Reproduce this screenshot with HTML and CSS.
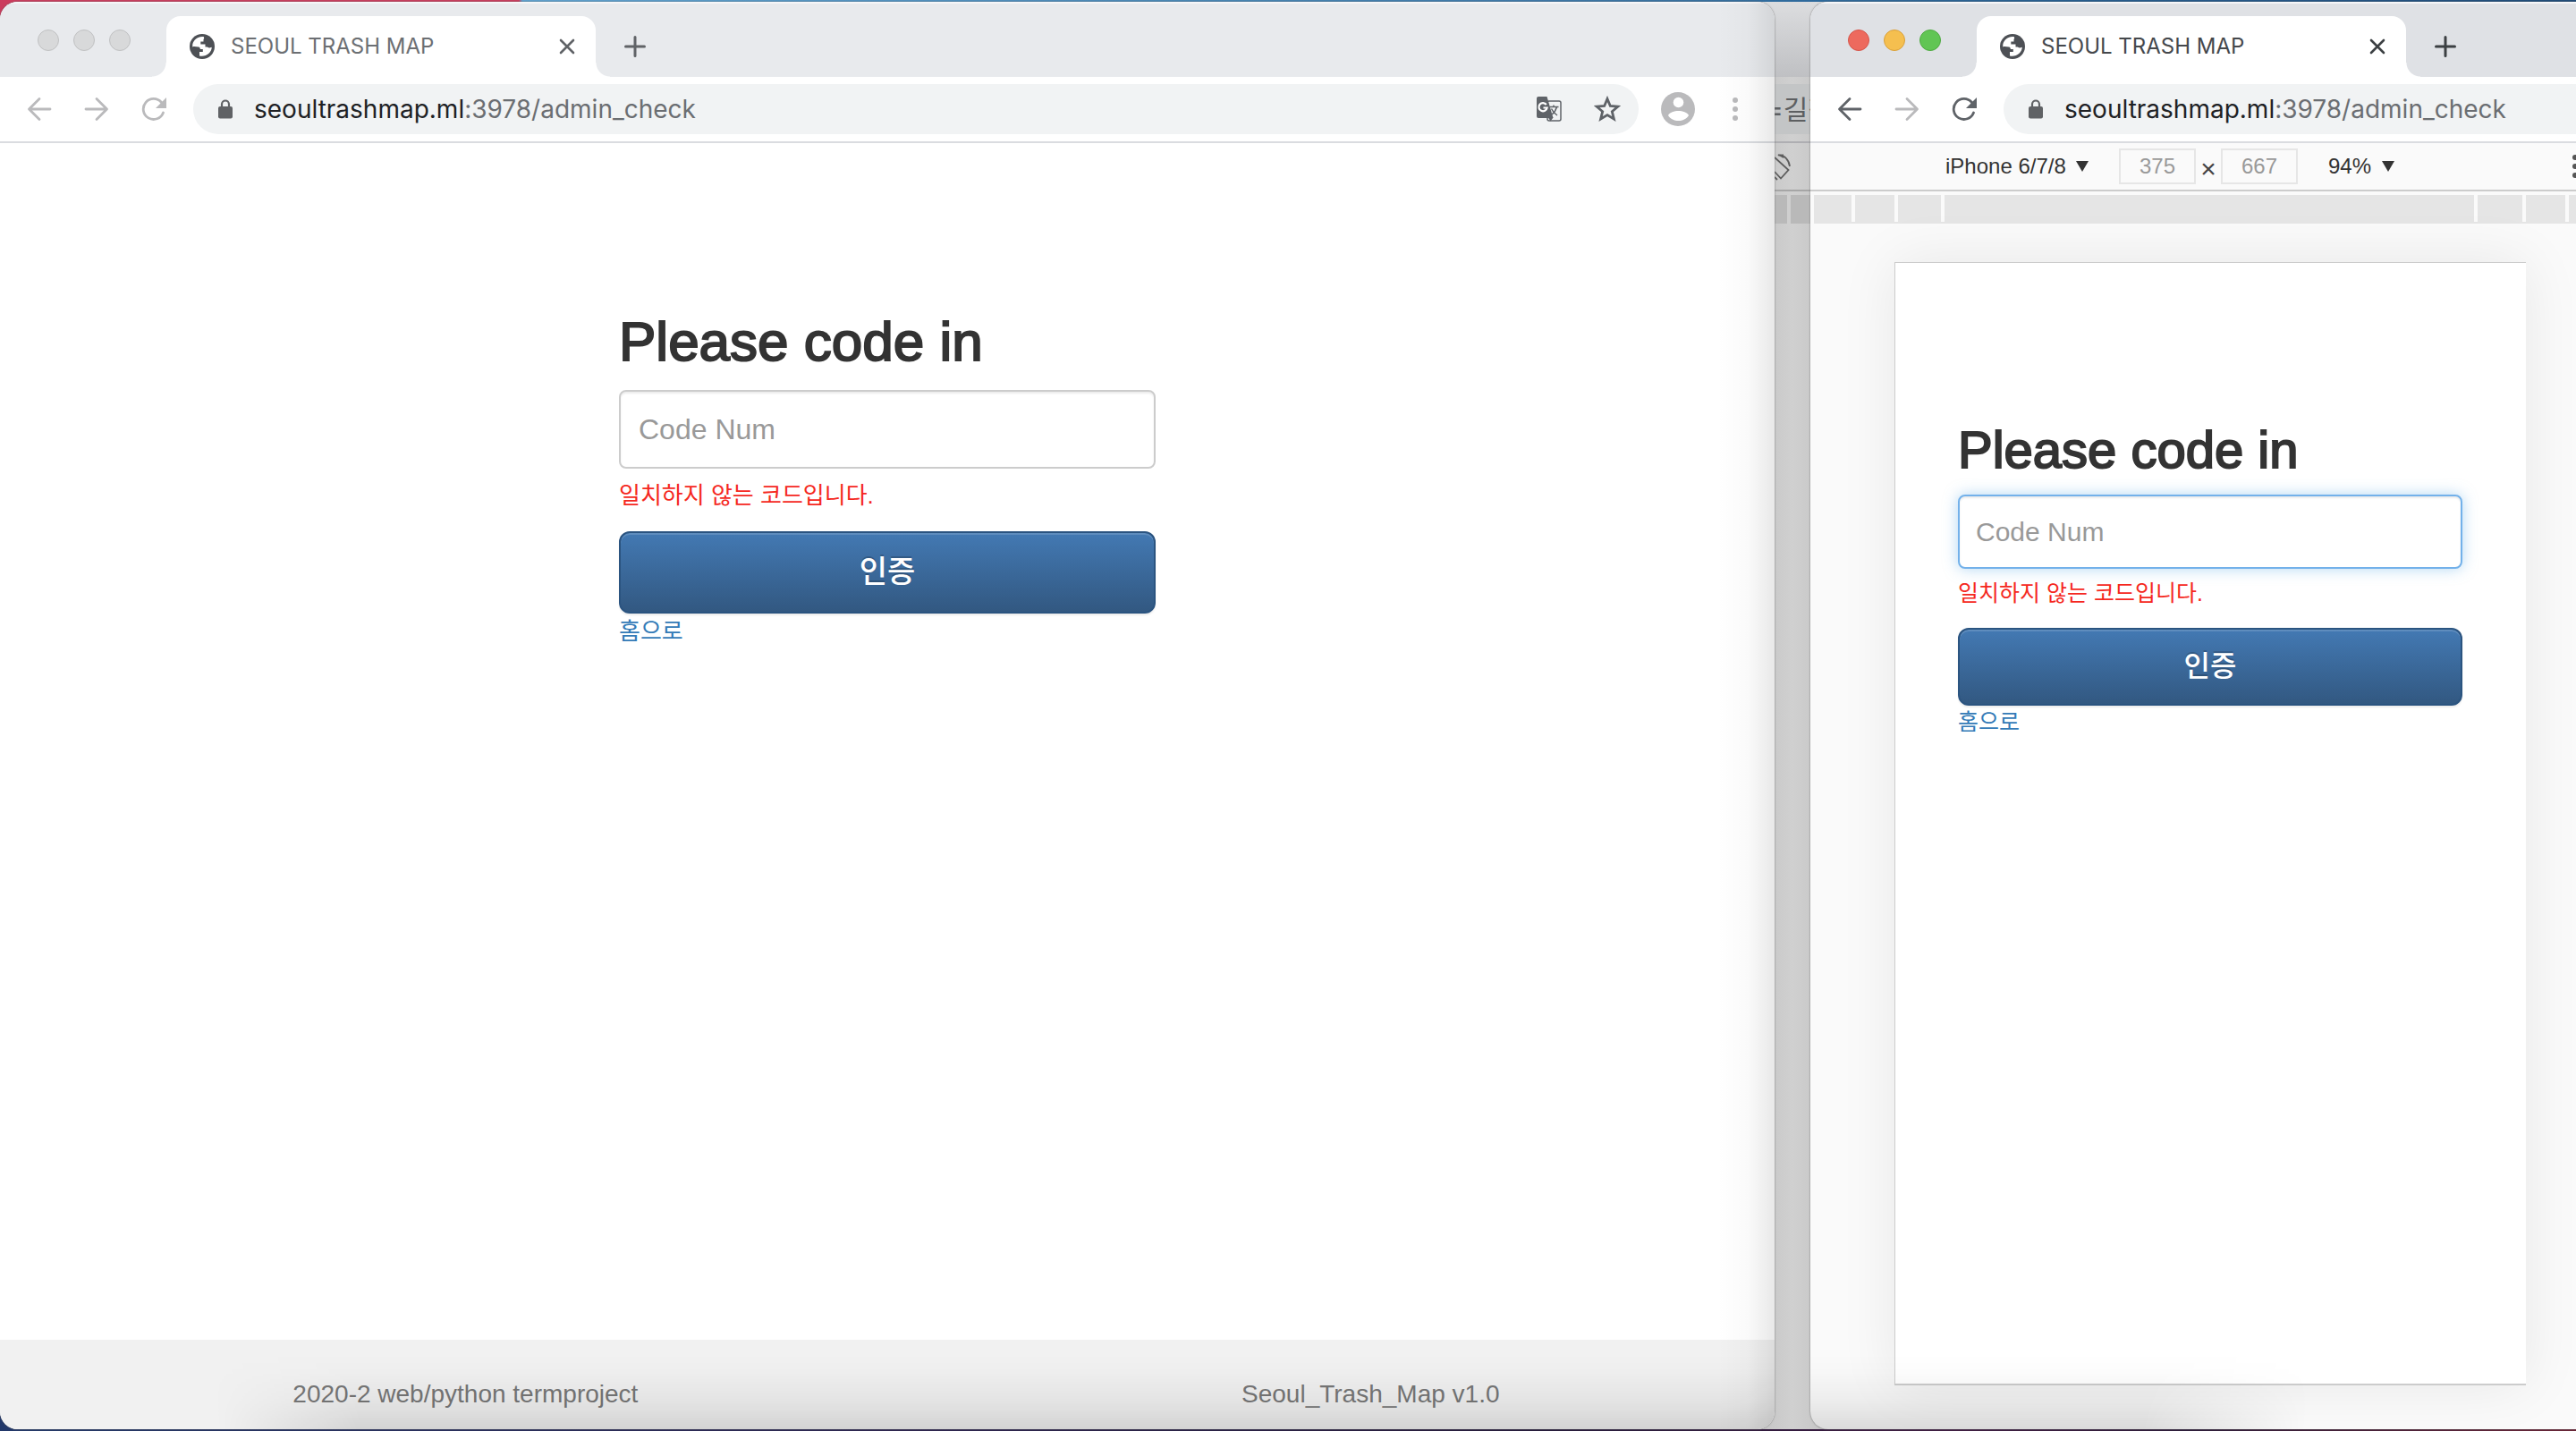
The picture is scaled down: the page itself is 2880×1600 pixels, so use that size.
FILE: index.html
```html
<!DOCTYPE html>
<html lang="ko">
<head>
<meta charset="utf-8">
<title>SEOUL TRASH MAP</title>
<link rel="stylesheet" href="styles.css">
</head>
<body>
<svg class="defs" aria-hidden="true">
  <symbol id="globe" viewBox="0 0 28 28">
    <circle cx="14" cy="14" r="14" fill="#4d5055"/>
    <path fill="#fff" d="M16 3.200C10 2 4.500 6 3.300 11.500L3.200 14.500C5 13.500 8 14.500 10 14.500C11.500 14.500 11.800 16 11.800 17H14.800V20H11V24.500C18 26 24.800 21 24.800 14.500C24 15.500 21.500 16 19.800 14.500H17.500V11.500H12.300V8.500H15.500V6Q16.500 5.500 16 3.200Z"/>
  </symbol>
  <symbol id="close" viewBox="0 0 18 18"><path d="M2 2 16 16M16 2 2 16" fill="none" stroke="currentColor" stroke-width="2.600" stroke-linecap="round"/></symbol>
  <symbol id="plus" viewBox="0 0 24 24"><path d="M12 1.500V22.500M1.500 12H22.500" fill="none" stroke="currentColor" stroke-width="3" stroke-linecap="round"/></symbol>
  <symbol id="back" viewBox="0 0 28 28"><path d="M26 14H3M14 2.500 2.500 14 14 25.500" fill="none" stroke="currentColor" stroke-width="2.800" stroke-linecap="round" stroke-linejoin="round"/></symbol>
  <symbol id="forward" viewBox="0 0 28 28"><path d="M2 14H25M14 2.500 25.500 14 14 25.500" fill="none" stroke="currentColor" stroke-width="2.800" stroke-linecap="round" stroke-linejoin="round"/></symbol>
  <symbol id="reload" viewBox="0 0 28 28"><path d="M24.500 18A11.500 11.500 0 1 1 22.500 6.500" fill="none" stroke="currentColor" stroke-width="2.800" stroke-linecap="round"/><path d="M28 1V13H16Z" fill="currentColor"/></symbol>
  <symbol id="lock" viewBox="0 0 18 22"><rect x="1" y="8" width="16" height="13.500" rx="2" fill="#606265"/><path d="M5 9V5.500A4 4 0 0 1 13 5.500V9" fill="none" stroke="#606265" stroke-width="2.200"/></symbol>
</svg>
<div class="desktop">

  <section class="window window-left">
    <header class="strip">
      <span class="light"></span><span class="light"></span><span class="light"></span>
      <div class="tab">
        <svg class="globe"><use href="#globe"/></svg>
        <span class="tab-title">SEOUL TRASH MAP</span>
        <button class="icon-button" aria-label="Close tab"><svg class="close"><use href="#close"/></svg></button>
      </div>
      <button class="icon-button new-tab" aria-label="New tab"><svg class="plus"><use href="#plus"/></svg></button>
    </header>
    <nav class="toolbar">
      <button class="icon-button" aria-label="Back"><svg class="nav-icon"><use href="#back"/></svg></button>
      <button class="icon-button" aria-label="Forward"><svg class="nav-icon"><use href="#forward"/></svg></button>
      <button class="icon-button" aria-label="Reload"><svg class="nav-icon"><use href="#reload"/></svg></button>
      <div class="omnibox">
        <svg class="lock"><use href="#lock"/></svg>
        <span class="url"><b>seoultrashmap.ml</b>:3978/admin_check</span>
        <svg class="translate" viewBox="0 0 28 28">
          <rect x="12" y="5" width="15" height="22" rx="2" fill="#f1f3f4" stroke="#5f6368" stroke-width="1.500"/>
          <path d="M2 0H11.500L18.500 24H2A2 2 0 0 1 0 22V2A2 2 0 0 1 2 0Z" fill="#5f6368"/>
          <path d="M13 23.500H18.500L15.500 27.500Z" fill="#5f6368"/>
          <path d="M10.800 9A4.600 4.600 0 1 0 11.600 12.500H7.500" fill="none" stroke="#fff" stroke-width="2.200"/>
          <path d="M14.500 11.500H24.500M19 9.500V11.500M22.500 11.500Q21 17 17 20M16.500 13.500Q18.500 18 23 21" fill="none" stroke="#5f6368" stroke-width="1.500"/>
        </svg>
        <svg class="star" viewBox="0 0 30 30"><path d="M15 3.500 18.300 11.500 26.800 12.200 20.300 17.700 22.400 26 15 21.600 7.600 26 9.700 17.700 3.200 12.200 11.700 11.500Z" fill="none" stroke="#5f6368" stroke-width="2.800"/></svg>
      </div>
      <svg class="avatar" viewBox="0 0 38 38"><circle cx="19" cy="19" r="19" fill="#bababc"/><circle cx="19.500" cy="11.500" r="5.800" fill="#fff"/><path d="M8 26C9.500 22.500 15 21 19.500 21S29.500 22.500 31 26C28.500 30 24 32 19.500 32S10.500 30 8 26Z" fill="#fff"/></svg>
      <svg class="dots" viewBox="0 0 6 26"><g fill="currentColor"><circle cx="3" cy="3" r="3"/><circle cx="3" cy="13" r="3"/><circle cx="3" cy="23" r="3"/></g></svg>
    </nav>
    <main class="page">
      <form class="code-form">
        <h1>Please code in</h1>
        <input class="code" type="text" placeholder="Code Num" aria-label="Code Num">
        <p class="error">일치하지 않는 코드입니다.</p>
        <button class="submit" type="button">인증</button>
        <a class="home" href="#">홈으로</a>
      </form>
    </main>
    <footer class="footer"><span>2020-2 web/python termproject</span><span>Seoul_Trash_Map v1.0</span></footer>
  </section>

  <section class="behind">
    <div class="behind-strip"></div>
    <div class="behind-toolbar"><div class="behind-omnibox">=길찾</div></div>
    <div class="behind-device">
      <svg class="rotate" viewBox="0 0 20 34"><path d="M0 6 15.500 20 7 29.500 0 22M4 3.500C11 3 16 9 17 16M0 28 3 31" fill="none" stroke="#5d5d5d" stroke-width="1.800"/><path d="M3 3 10 2.500 10 7Z" fill="#5d5d5d"/></svg>
    </div>
    <div class="behind-ruler"></div>
  </section>

  <section class="window window-right">
    <header class="strip">
      <span class="light red"></span><span class="light yellow"></span><span class="light green"></span>
      <div class="tab">
        <svg class="globe"><use href="#globe"/></svg>
        <span class="tab-title">SEOUL TRASH MAP</span>
        <button class="icon-button" aria-label="Close tab"><svg class="close"><use href="#close"/></svg></button>
      </div>
      <button class="icon-button new-tab" aria-label="New tab"><svg class="plus"><use href="#plus"/></svg></button>
    </header>
    <nav class="toolbar">
      <button class="icon-button" aria-label="Back"><svg class="nav-icon"><use href="#back"/></svg></button>
      <button class="icon-button faded" aria-label="Forward"><svg class="nav-icon"><use href="#forward"/></svg></button>
      <button class="icon-button" aria-label="Reload"><svg class="nav-icon"><use href="#reload"/></svg></button>
      <div class="omnibox">
        <svg class="lock"><use href="#lock"/></svg>
        <span class="url"><b>seoultrashmap.ml</b>:3978/admin_check</span>
      </div>
    </nav>
    <div class="device-bar">
      <select class="pick model" aria-label="Device"><option>iPhone 6/7/8</option></select><span class="caret"></span>
      <input class="dimension" type="text" value="375" aria-label="Width">
      <span class="times">×</span>
      <input class="dimension" type="text" value="667" aria-label="Height">
      <select class="pick zoom" aria-label="Zoom"><option>94%</option></select><span class="caret"></span>
      <svg class="dots" viewBox="0 0 6 26"><g fill="currentColor"><circle cx="3" cy="3" r="3"/><circle cx="3" cy="13" r="3"/><circle cx="3" cy="23" r="3"/></g></svg>
    </div>
    <div class="ruler"><i></i><i></i><i></i><i></i><i></i><i></i><i></i></div>
    <div class="stage">
      <main class="device">
        <form class="code-form">
          <h1>Please code in</h1>
          <input class="code focused" type="text" placeholder="Code Num" aria-label="Code Num">
          <p class="error">일치하지 않는 코드입니다.</p>
          <button class="submit" type="button">인증</button>
          <a class="home" href="#">홈으로</a>
        </form>
      </main>
    </div>
  </section>
</div>
</body>
</html>
```
FILE: styles.css
```css
* { box-sizing: border-box; }

body {
  margin: 0;
  font-family: "Liberation Sans", "Noto Sans CJK KR", sans-serif;
  color: #333;
}

.defs { position: absolute; width: 0; height: 0; }

svg { display: block; flex: none; }

.desktop {
  display: grid;
  grid-template-columns: 1984fr 40fr 856fr;
  height: 100vh;
  padding: 2px 0;
  overflow: hidden;
  background:
    linear-gradient(90deg, #cb3c5d 0 580px, #5fa3d0 584px, #3c79aa 1700px, #235d90 2300px, #1d4a78) top / 100% 50% no-repeat,
    linear-gradient(90deg, #22386a, #2c2450 35%, #241a3a 60%, #3f1c42 76%, #2b1b38 85%, #6b2436) bottom / 100% 50% no-repeat;
}

/* browser windows */
.window {
  position: relative;
  z-index: 1;
  display: flex;
  flex-direction: column;
  min-width: 0;
  overflow: hidden;
  background: #fff;
}

.window-left {
  border-radius: 20px;
  box-shadow: 0 0 2px #666;
  color: #bababc;
}

.window-right {
  border-radius: 20px 0 0 20px;
  box-shadow: 0 0 2px #666;
  background: #fafafa;
  color: #5f6368;
}

/* soft shade along the bottom edge of each window */
.window::before {
  content: "";
  position: absolute;
  z-index: 2;
  inset: auto 0 0;
  height: 84px;
  pointer-events: none;
  background: linear-gradient(0deg, rgba(0, 0, 0, .12), rgba(0, 0, 0, .05) 32px, rgba(0, 0, 0, .01) 64px, transparent);
}

.window-left::before { mask-image: linear-gradient(80deg, transparent 240px, #000 400px); }
.window-right::before { mask-image: linear-gradient(100deg, #000 380px, transparent 560px); }

.window-left::after {
  content: "";
  position: absolute;
  inset: 0 0 0 auto;
  width: 64px;
  pointer-events: none;
  background: linear-gradient(270deg, rgba(0, 0, 0, .09), rgba(0, 0, 0, .02) 30px, transparent);
}

.strip {
  display: flex;
  align-items: center;
  height: 84px;
  padding-left: 42px;
  background: #e8eaed;
  border-top: 2px solid #f6f6f8;
}

.window-right .strip { background: #dfe1e5; }

.light {
  align-self: flex-start;
  width: 24px;
  height: 24px;
  margin: 29px 16px 0 0;
  border: 1px solid #c0c1c2;
  border-radius: 50%;
  background: #d8d9da;
}

.red { background: #ed6a5e; border-color: #d5554a; }
.yellow { background: #f5bf4f; border-color: #d9a03a; }
.green { background: #61c554; border-color: #4faa42; }

.tab {
  position: relative;
  display: flex;
  align-items: center;
  align-self: flex-end;
  width: 480px;
  height: 68px;
  margin: 0 32px 0 24px;
  padding: 0 23px 0 26px;
  border-radius: 16px 16px 0 0;
  background: #fff;
}

.tab::before,
.tab::after {
  content: "";
  position: absolute;
  bottom: 0;
  width: 16px;
  height: 16px;
}

.tab::before { right: 100%; background: radial-gradient(circle at 0 0, transparent 15px, #fff 16px); }
.tab::after { left: 100%; background: radial-gradient(circle at 100% 0, transparent 15px, #fff 16px); }

.globe { width: 28px; height: 28px; }

.tab-title {
  flex: 1;
  margin-left: 18px;
  font: 24px/32px Inter, sans-serif;
  color: #6c6f73;
}

.window-right .tab-title { color: #45484c; }

.icon-button {
  display: block;
  padding: 0;
  border: 0;
  background: none;
  color: inherit;
}

.strip .icon-button { color: #606367; }
.window-right .strip .icon-button { color: #3c4043; }
.new-tab { padding-top: 14px; }
.close { width: 18px; height: 18px; }
.plus { width: 24px; height: 24px; }

.toolbar {
  display: flex;
  align-items: center;
  gap: 36px;
  height: 74px;
  padding-left: 30px;
  border-bottom: 2px solid #dadce0;
  background: #fff;
}

.nav-icon { width: 28px; height: 28px; }
.faded { color: #bababc; }

.omnibox {
  display: flex;
  flex: 1;
  align-items: center;
  height: 56px;
  margin-left: -6px;
  padding: 0 20px 0 27px;
  border-radius: 28px;
  background: #f1f3f4;
}

.window-right .omnibox { border-radius: 28px 0 0 28px; }

.lock { width: 18px; height: 22px; }

.url {
  flex: 1;
  margin-left: 23px;
  font: 28px/36px Inter, sans-serif;
  color: #6b6e72;
  white-space: nowrap;
}

.url b { font-weight: 400; color: #202124; }

.translate { width: 28px; height: 28px; }
.star { width: 30px; height: 30px; margin-left: 36px; }
.avatar { width: 38px; height: 38px; margin-left: -11px; }
.dots { width: 6px; height: 26px; }
.window-left .dots { margin: 0 41px 0 6px; }

/* the admin page */
.page { flex: 1; padding: 188px 0 0; }

.code-form {
  display: flex;
  flex-direction: column;
  width: 600px;
  margin: 0 auto;
}

h1 {
  margin: 0 0 20px;
  font-size: 62px;
  font-weight: 400;
  line-height: 68px;
  color: #333;
  -webkit-text-stroke: 2px #333;
}

.code {
  height: 88px;
  padding: 0 20px;
  border: 2px solid #ccc;
  border-radius: 8px;
  outline: 0;
  background: #fff;
  box-shadow: inset 0 2px 2px rgba(0, 0, 0, .075);
  font: 32px/40px "Liberation Sans", sans-serif;
}

.code::placeholder { color: #999; opacity: 1; }

.focused {
  border-color: #73b1ea;
  box-shadow: inset 0 2px 2px rgba(0, 0, 0, .075), 0 0 16px rgba(102, 175, 233, .5);
}

.error {
  margin: 10px 0 20px;
  font-size: 26px;
  line-height: 40px;
  color: #f5281e;
}

.submit {
  height: 92px;
  padding: 0 0 2px;
  border: 2px solid #2b5480;
  border-radius: 12px;
  background: linear-gradient(#4379b3, #325881);
  box-shadow: inset 0 2px 0 rgba(255, 255, 255, .15), 0 2px 2px rgba(0, 0, 0, .075);
  font: 500 34px/44px "Liberation Sans", "Noto Sans CJK KR", sans-serif;
  color: #fff;
  text-shadow: 0 -2px 0 rgba(0, 0, 0, .2);
}

.home {
  align-self: flex-start;
  font-size: 26px;
  line-height: 40px;
  color: #337ab7;
  text-decoration: none;
}

.footer {
  display: flex;
  justify-content: space-between;
  height: 100px;
  padding: 43px 15.500% 0 16.500%;
  background: #f1f1f1;
  font-size: 28px;
  line-height: 36px;
  color: #777;
}

/* sliver of the window in the background */
.behind {
  display: flex;
  flex-direction: column;
  min-width: 0;
  margin: 0 -20px;
  padding: 0 20px;
  overflow: hidden;
  background: linear-gradient(90deg, #c4c4c4, #d0d0d0 50%, #c4c4c4);
}

.behind-strip { height: 84px; margin: 0 -20px; background: linear-gradient(#dcdddf, #bfc0c3); }
.behind-toolbar { height: 74px; padding: 8px 0; border-bottom: 2px solid #aeaeb2; }

.behind-omnibox {
  height: 56px;
  overflow: hidden;
  background: #c3c5c6;
  font: 30px/56px Inter, "Noto Sans CJK KR", sans-serif;
  text-indent: -10px;
  color: #5d5f61;
  white-space: nowrap;
}

.behind-device { height: 54px; padding-top: 10px; border-bottom: 2px solid #a6a6a6; }
.rotate { width: 20px; height: 34px; }
.behind-ruler { height: 32px; margin-top: 4px; background: linear-gradient(90deg, #b9b9b9 14px, #cfcfcf 14px 18px, #b9b9b9 18px); }

/* device emulation */
.device-bar {
  display: flex;
  align-items: center;
  height: 54px;
  padding-left: 151px;
  border-bottom: 2px solid #ccc;
  background: #fafafa;
  overflow: hidden;
}

.pick {
  appearance: none;
  flex: none;
  padding: 0;
  border: 0;
  background: none;
  font: 24px/32px "Liberation Sans", sans-serif;
  color: #333;
}

.model { width: 146px; }
.zoom { width: 60px; margin-left: 34px; }

.caret {
  flex: none;
  border: 7px solid transparent;
  border-top: 12px solid #333;
  border-bottom: 0;
}

.dimension {
  flex: none;
  width: 86px;
  height: 40px;
  padding: 0;
  border: 2px solid #e6e6e6;
  background: #fafafa;
  font: 24px/32px "Liberation Sans", sans-serif;
  color: #999;
  text-align: center;
}

.caret + .dimension { margin-left: 34px; }
.times { width: 28px; padding-top: 6px; font-size: 30px; line-height: 32px; text-align: center; color: #444; }
.device-bar .dots { margin: 0 -2px 0 auto; color: #555; }

.ruler {
  display: grid;
  grid-template-columns: 42fr 44fr 48fr 592fr 50fr 44fr 8fr;
  gap: 4px;
  height: 32px;
  margin: 4px 0 0 4px;
  border-bottom: 2px solid #e5e5e5;
}

.ruler i { background: #e5e5e5; }

.stage { flex: 1; padding: 43px 56px 49px 94px; }

.device {
  height: 100%;
  padding: 177px 71px 0 70px;
  border: 1px solid #ccc;
  border-right: 0;
  border-bottom-width: 2px;
  background: #fff;
  box-shadow: 0 0 60px rgba(0, 0, 0, .08);
}

.device .code-form { width: auto; }
.device h1 { margin-bottom: 18px; font-size: 58px; line-height: 64px; }
.device .code { height: 83px; padding: 0 18px; font-size: 30px; }
.device .error { margin: 9px 0 21px; font-size: 25px; line-height: 36px; }
.device .submit { height: 87px; font-size: 32px; }
.device .home { font-size: 25px; line-height: 36px; }
```
